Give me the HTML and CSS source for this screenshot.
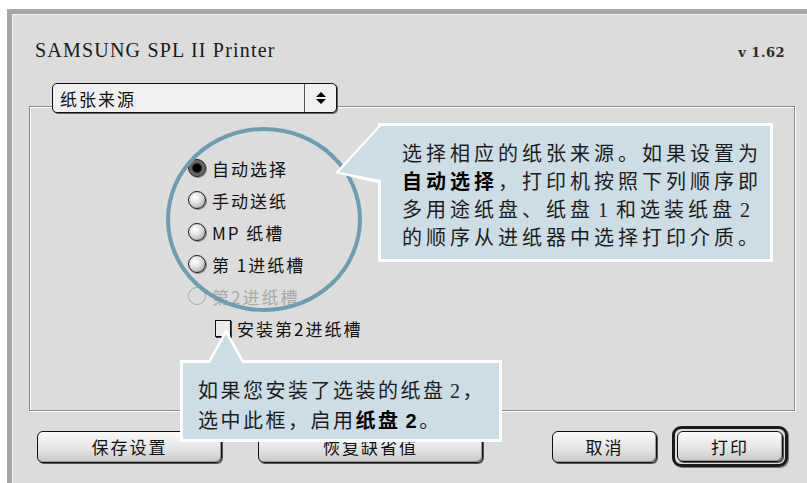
FILE: index.html
```html
<!DOCTYPE html>
<html lang="zh-CN">
<head>
    <meta charset="UTF-8">
    <title>SAMSUNG SPL II Printer</title>
    <link rel="stylesheet" href="styles.css">
</head>
<body>
    <div class="window">
        <!-- 标题 -->
        <div class="title-row">
            <span class="title">SAMSUNG SPL II Printer</span>
            <span class="version">v 1.62</span>
        </div>

        <!-- 弹出菜单 -->
        <div class="popup">
            <span class="popup-label">纸张来源</span>
            <span class="popup-arrows">
                <svg width="10" height="14" viewBox="0 0 10 14">
                    <polygon points="0,6 5,1 10,6" fill="#000"/>
                    <polygon points="0,8 5,13 10,8" fill="#000"/>
                </svg>
            </span>
        </div>

        <div class="group">
            <ul class="radios">
                <li class="radio checked"><span class="knob"></span>自动选择</li>
                <li class="radio"><span class="knob"></span>手动送纸</li>
                <li class="radio"><span class="knob"></span>MP 纸槽</li>
                <li class="radio"><span class="knob"></span>第 1进纸槽</li>
                <li class="radio disabled"><span class="knob"></span>第2进纸槽</li>
            </ul>
            <div class="check"><span class="box"></span>安装第2进纸槽</div>
        </div>

        <div class="buttons">
            <button class="btn btn-save">保存设置</button>
            <button class="btn btn-reset">恢复缺省值</button>
            <button class="btn btn-cancel">取消</button>
            <span class="default-ring"><button class="btn btn-print">打印</button></span>
        </div>

        <!-- 说明标注 -->
        <div class="ring"></div>
        <div class="callout callout-source">
            选择相应的纸张来源。如果设置为<br>
            <b>自动选择</b>，打印机按照下列顺序即<br>
            多用途纸盘、纸盘 1 和选装纸盘 2<br>
            的顺序从进纸器中选择打印介质。
        </div>
        <div class="callout callout-tray">
            如果您安装了选装的纸盘 2，<br>
            选中此框，启用<b>纸盘 2</b>。
        </div>
    </div>
</body>
</html>
```

FILE: styles.css
```css
body {
    margin: 0;
    background: #fff;
    font-family: "Noto Sans CJK SC", sans-serif;
    color: #111;
}
.window {
    position: relative;
    margin: 9px 0 0 7px;
    height: 469px;
    border-top: 5px solid #a6a6a6;
    border-left: 5px solid #a6a6a6;
    background: #dcdcdc;
    box-shadow: inset 1px 1px 0 #f4f4f4;
    display: flex;
    flex-direction: column;
}
.title-row {
    display: flex;
    justify-content: space-between;
    align-items: baseline;
    padding: 26px 22px 0 23px;
    height: 20px;
    line-height: 20px;
}
.title {
    font-family: "Liberation Serif", serif;
    font-size: 20px;
    letter-spacing: 1.2px;
    color: #1a1a1a;
}
.version {
    font-family: "DejaVu Serif", serif;
    font-size: 13px;
    font-weight: bold;
    letter-spacing: 0.5px;
    color: #2a2a2a;
}
.popup {
    position: relative;
    z-index: 1;
    display: flex;
    align-items: center;
    box-sizing: border-box;
    width: 285px;
    height: 30px;
    margin: 23px 0 -7px 40px;
    border: 1px solid #111;
    border-radius: 5px;
    background: #f0f0f0;
    box-shadow: 1px 1px 0 #666;
}
.popup-label {
    flex: 1;
    padding-left: 7px;
    font-size: 17px;
    letter-spacing: 2px;
}
.popup-arrows {
    display: flex;
    align-items: center;
    justify-content: center;
    width: 31px;
    height: 100%;
    border-left: 1px solid #555;
}
.group {
    box-sizing: border-box;
    width: 766px;
    height: 305px;
    margin-left: 17px;
    padding: 45px 0 0 158px;
    border: 1px solid #8a8a8a;
    box-shadow: 1px 1px 0 #fff, inset 1px 1px 0 #fff;
}
.radios {
    list-style: none;
    margin: 0;
    padding: 0;
}
.radio, .check {
    display: flex;
    align-items: center;
    gap: 6px;
    height: 32px;
    font-size: 17px;
    letter-spacing: 2px;
}
.knob {
    box-sizing: border-box;
    width: 18px;
    height: 18px;
    border: 1px solid #1a1a1a;
    border-radius: 50%;
    background: radial-gradient(circle at 38% 35%, #fff 0, #e6e6e6 35%, #9a9a9a 100%);
    box-shadow: 1px 1px 0 #888;
}
.checked .knob {
    background: radial-gradient(circle at 50% 50%, #000 0, #000 4px, #555 5px, #999 100%);
}
.disabled {
    color: #aaa;
}
.disabled .knob {
    border-color: #aaa;
    background: none;
    box-shadow: none;
}
.check {
    margin-left: 27px;
}
.box {
    box-sizing: border-box;
    width: 16px;
    height: 17px;
    border: 1px solid #111;
    background: #ececec;
    box-shadow: 1px 1px 0 #444;
}
.buttons {
    display: flex;
    align-items: center;
    height: 41px;
    margin-top: 15px;
    padding: 0 19px 0 25px;
}
.btn {
    box-sizing: border-box;
    height: 32px;
    padding: 0;
    border: 1px solid #111;
    border-radius: 6px;
    background: linear-gradient(#fbfbfb, #e2e2e2 60%, #c8c8c8);
    box-shadow: 1px 1px 0 #555, inset -1px -1px 0 #999;
    font-family: inherit;
    font-size: 17px;
    letter-spacing: 2px;
    color: #111;
}
.btn-save {
    width: 185px;
}
.btn-reset {
    width: 225px;
    margin-left: 36px;
}
.btn-cancel {
    width: 105px;
    margin-left: auto;
}
.default-ring {
    box-sizing: border-box;
    display: flex;
    width: 116px;
    height: 41px;
    margin-left: 15px;
    padding: 2px;
    border: 3px solid #1a1a1a;
    border-radius: 9px;
    box-shadow: 1px 1px 0 #777;
}
.btn-print {
    width: 100%;
    height: 100%;
}
.ring {
    position: absolute;
    left: 154px;
    top: 113px;
    width: 196px;
    height: 185px;
    box-sizing: border-box;
    border: 4px solid #6d9db1;
    border-radius: 50%;
}
.callout {
    position: absolute;
    box-sizing: border-box;
    border: 3px solid #fff;
    background: #cddde6;
    font-family: "Liberation Serif", "Noto Sans CJK SC", serif;
    font-size: 20px;
    color: #1c1c1c;
    white-space: nowrap;
}
.callout b {
    font-family: "Liberation Sans", "Noto Sans CJK SC", sans-serif;
    font-weight: 700;
    color: #000;
}
.callout::before, .callout::after {
    content: "";
    position: absolute;
}
.callout-source {
    left: 366px;
    top: 109px;
    width: 395px;
    height: 139px;
    padding: 14px 0 0 21px;
    line-height: 28px;
    letter-spacing: 4px;
    word-spacing: -5px;
}
.callout-source::before, .callout-source::after {
    left: -49px;
    top: -3px;
    width: 49px;
    height: 62px;
}
.callout-source::before {
    background: #fff;
    clip-path: polygon(3px 50px, 49px 0, 49px 61px);
}
.callout-source::after {
    background: #cddde6;
    clip-path: polygon(7px 49px, 49px 3px, 49px 57px);
}
.callout-tray {
    left: 168px;
    top: 346px;
    width: 322px;
    height: 82px;
    padding: 13px 0 0 15px;
    line-height: 30px;
    letter-spacing: 2.5px;
    word-spacing: -3px;
}
.callout-tray::before, .callout-tray::after {
    left: 17px;
    top: -38px;
    width: 50px;
    height: 38px;
}
.callout-tray::before {
    background: #fff;
    clip-path: polygon(26px 4px, 7px 38px, 45px 38px);
}
.callout-tray::after {
    background: #cddde6;
    clip-path: polygon(26px 9px, 10px 38px, 42px 38px);
}
```
